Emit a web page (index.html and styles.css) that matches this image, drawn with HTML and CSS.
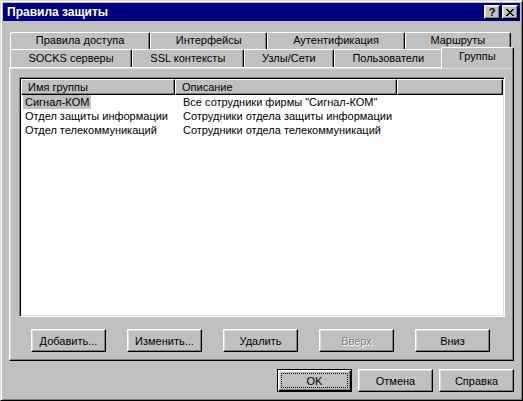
FILE: index.html
```html
<!DOCTYPE html>
<html lang="ru">
<head>
  <meta charset="UTF-8">
  <title>Правила защиты</title>
  <link rel="stylesheet" href="styles.css">
</head>
<body>
  <div class="window">
    <div class="titlebar">
      <span class="title">Правила защиты</span>
      <div class="title-buttons">
        <div class="tb-btn help">?</div>
        <div class="tb-btn">
          <svg width="8" height="7" viewBox="0 0 8 7"><path d="M0 0h2v1h1v1h2v-1h1v-1h2v1h-1v1h-1v1h-1v1h1v1h1v1h1v1h-2v-1h-1v-1h-2v1h-1v1h-2v-1h1v-1h1v-1h1v-1h-1v-1h-1v-1h-1z" fill="#000"/></svg>
        </div>
      </div>
    </div>

    <div class="content">
      <div class="tabs">
        <div class="tab-row back">
          <div class="tab">Правила доступа</div>
          <div class="tab">Интерфейсы</div>
          <div class="tab">Аутентификация</div>
          <div class="tab">Маршруты</div>
        </div>
        <div class="tab-row front">
          <div class="tab">SOCKS серверы</div>
          <div class="tab">SSL контексты</div>
          <div class="tab">Узлы/Сети</div>
          <div class="tab">Пользователи</div>
          <div class="tab selected">Группы</div>
        </div>
      </div>

      <div class="panel">
        <div class="listview">
          <div class="lv-header">
            <div class="lv-col">Имя группы</div>
            <div class="lv-col">Описание</div>
            <div class="lv-col"></div>
          </div>
          <div class="lv-row">
            <div class="lv-cell"><span class="lv-label active">Сигнал-КОМ</span></div>
            <div class="lv-cell sub">Все сотрудники фирмы "Сигнал-КОМ"</div>
          </div>
          <div class="lv-row">
            <div class="lv-cell"><span class="lv-label">Отдел защиты информации</span></div>
            <div class="lv-cell sub">Сотрудники отдела защиты информации</div>
          </div>
          <div class="lv-row">
            <div class="lv-cell"><span class="lv-label">Отдел телекоммуникаций</span></div>
            <div class="lv-cell sub">Сотрудники отдела телекоммуникаций</div>
          </div>
        </div>

        <div class="panel-buttons">
          <button class="btn">Добавить...</button>
          <button class="btn">Изменить...</button>
          <button class="btn">Удалить</button>
          <button class="btn" disabled>Вверх</button>
          <button class="btn">Вниз</button>
        </div>
      </div>

      <div class="dialog-buttons">
        <button class="btn default">OK</button>
        <button class="btn">Отмена</button>
        <button class="btn">Справка</button>
      </div>
    </div>
  </div>
</body>
</html>
```

FILE: styles.css
```css
* {
  box-sizing: border-box;
}

body {
  margin: 0;
  font-family: "Liberation Sans", Arial, sans-serif;
  font-size: 11px;
  color: #000;
  background: #c0c0c0;
}

.window {
  width: 523px;
  height: 401px;
  padding: 2px;
  background: #c0c0c0;
  border: 1px solid;
  border-color: #dfdfdf #000 #000 #dfdfdf;
  box-shadow: inset 1px 1px #fff, inset -1px -1px #808080;
  display: flex;
  flex-direction: column;
}

/* title bar */
.titlebar {
  height: 18px;
  padding: 0 2px;
  background: #000080;
  color: #fff;
  display: flex;
  align-items: center;
  justify-content: space-between;
}

.title {
  padding-left: 2px;
  font-weight: bold;
  font-size: 12px;
}

.title-buttons {
  display: flex;
  gap: 2px;
}

.tb-btn {
  width: 16px;
  height: 14px;
  background: #c0c0c0;
  border: 1px solid;
  border-color: #fff #000 #000 #fff;
  box-shadow: inset -1px -1px #808080, inset 1px 1px #dfdfdf;
  display: flex;
  align-items: center;
  justify-content: center;
}

.tb-btn.help {
  color: #000;
  font-weight: bold;
  font-size: 11px;
  line-height: 12px;
}

/* dialog body */
.content {
  padding: 11px 6px 0 6px;
}

.tab-row {
  display: flex;
}

.tab-row.back {
  height: 17px;
  padding: 0 3px 0 1px;
}

.tab-row.front {
  height: 18px;
  padding: 0 2px 0 1px;
  align-items: flex-end;
}

.tab {
  flex: 1 1 auto;
  height: 100%;
  padding-top: 1px;
  text-align: center;
  white-space: nowrap;
  background: #c0c0c0;
  border-top: 1px solid #fff;
  border-left: 1px solid #fff;
  border-right: 1px solid #000;
  border-radius: 2px 2px 0 0;
  box-shadow: inset -1px 0 #808080;
}

.tab-row.front .tab {
  height: 18px;
  padding-top: 2px;
}

.tab-row.front .tab.selected {
  position: relative;
  z-index: 1;
  height: 21px;
  margin: 0 -2px -1px;
  padding-top: 2px;
}

.panel {
  padding: 9px 8px 8px 9px;
  border: 1px solid;
  border-color: #fff #000 #000 #fff;
  box-shadow: inset -1px -1px #808080, inset 1px 1px #dfdfdf;
}

/* list view */
.listview {
  height: 240px;
  padding: 1px;
  background: #fff;
  border: 1px solid;
  border-color: #808080 #fff #fff #808080;
  box-shadow: inset 1px 1px #000, inset -1px -1px #dfdfdf;
}

.lv-header,
.lv-row {
  display: grid;
  grid-template-columns: 154px 222px 1fr;
}

.lv-col {
  height: 16px;
  padding-left: 6px;
  line-height: 14px;
  white-space: nowrap;
  background: #c0c0c0;
  border: 1px solid;
  border-color: #fff #000 #000 #fff;
  box-shadow: inset -1px -1px #808080;
}

.lv-row {
  height: 14px;
  line-height: 14px;
}

.lv-cell {
  padding-left: 2px;
  white-space: nowrap;
}

.lv-cell.sub {
  padding-left: 8px;
}

.lv-label {
  display: inline-block;
  height: 14px;
  padding: 0 2px;
}

.lv-label.active {
  background: #c0c0c0;
}

/* buttons */
.btn {
  width: 75px;
  height: 23px;
  padding: 0;
  font-family: inherit;
  font-size: 11px;
  color: #000;
  background: #c0c0c0;
  border: 1px solid;
  border-color: #fff #000 #000 #fff;
  box-shadow: inset -1px -1px #808080, inset 1px 1px #dfdfdf;
}

.btn:disabled {
  color: #808080;
  text-shadow: 1px 1px #fff;
}

.btn.default {
  position: relative;
  border-color: #000;
  box-shadow: inset 1px 1px #fff, inset -1px -1px #000, inset -2px -2px #808080, inset 2px 2px #dfdfdf;
}

.btn.default::after {
  content: "";
  position: absolute;
  top: 3px;
  left: 3px;
  right: 3px;
  bottom: 3px;
  border: 1px dotted #000;
}

.panel-buttons {
  display: flex;
  gap: 21px;
  margin-top: 12px;
  padding-left: 12px;
}

.dialog-buttons {
  display: flex;
  justify-content: flex-end;
  gap: 6px;
  margin-top: 8px;
}
```
